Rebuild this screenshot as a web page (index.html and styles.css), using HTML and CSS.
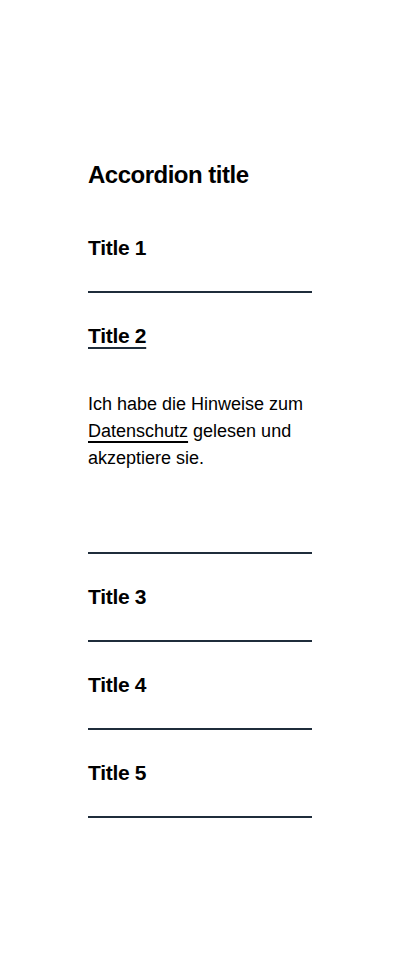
FILE: index.html
```html
<!DOCTYPE html>
<html lang="de">
<head>
<meta charset="utf-8">
<title>Accordion</title>
<link rel="stylesheet" href="styles.css">
</head>
<body>
<main class="page">
  <section class="accordion">
    <h2 class="accordion-heading">Accordion title</h2>
    <div class="item">
      <button class="item-title" type="button">Title 1</button>
    </div>
    <div class="item open">
      <button class="item-title" type="button"><span class="active">Title 2</span></button>
      <div class="panel">
        <p>Ich habe die Hinweise zum <a href="#" class="link">Datenschutz</a> gelesen und akzeptiere sie.</p>
      </div>
    </div>
    <div class="item">
      <button class="item-title" type="button">Title 3</button>
    </div>
    <div class="item">
      <button class="item-title" type="button">Title 4</button>
    </div>
    <div class="item">
      <button class="item-title" type="button">Title 5</button>
    </div>
  </section>
</main>
</body>
</html>
```

FILE: styles.css
```css
html, body {
  margin: 0;
  padding: 0;
  background: #ffffff;
}

.page {
  display: flex;
  justify-content: center;
  padding-top: 161px;
}

.accordion {
  width: 224px;
  font-family: "Liberation Sans", Arial, sans-serif;
  color: #000000;
}

.accordion-heading {
  margin: 0 0 16px;
  font-size: 24px;
  line-height: 28px;
  font-weight: 700;
  letter-spacing: -0.5px;
}

.item {
  border-bottom: 2px solid #1f2d3b;
}

.item-title {
  display: block;
  width: 100%;
  padding: 24px 0;
  margin: 0;
  border: 0;
  background: none;
  text-align: left;
  font-family: inherit;
  font-size: 21px;
  line-height: 38px;
  font-weight: 700;
  color: #000000;
  letter-spacing: -0.3px;
  cursor: pointer;
}

.active {
  text-decoration: underline;
  text-decoration-thickness: 2px;
  text-underline-offset: 4px;
  text-decoration-color: #1f2d3b;
}

.panel {
  padding: 12px 0 80px;
}

.panel p {
  margin: 0;
  font-size: 18px;
  line-height: 27px;
  color: #000000;
}

.link {
  color: #000000;
  text-decoration: underline;
  text-decoration-thickness: 2px;
  text-underline-offset: 4px;
}
```
